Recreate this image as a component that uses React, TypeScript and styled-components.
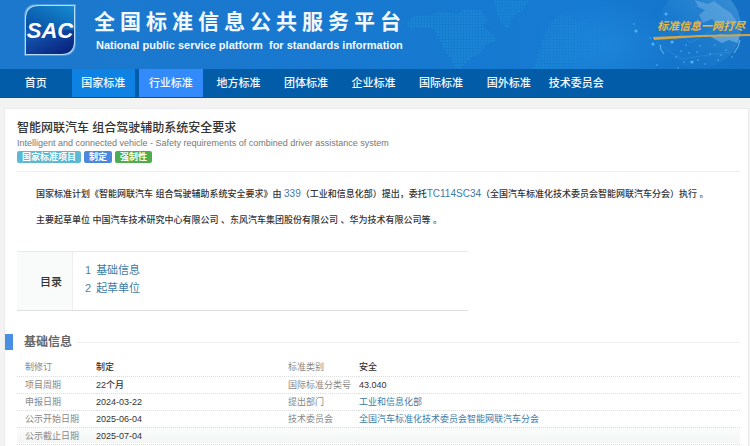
import React from "react";
import styled, { createGlobalStyle } from "styled-components";

const GlobalStyle = createGlobalStyle`
  * { box-sizing: border-box; }
  body {
    margin: 0;
    background: #f4f3f3;
    color: #333;
    font-family: "Liberation Sans", "Noto Sans CJK SC", sans-serif;
    font-size: 9px;
    overflow: hidden;
  }
`;

const Banner = styled.header`
  position: relative;
  display: flex;
  align-items: flex-start;
  height: 69px;
  padding: 2px 0 0 22px;
  overflow: hidden;
  background: linear-gradient(90deg, #1c78cd 0%, #1779d0 55%, #167bd3 78%, #1370c4 100%);
`;

const BannerArt = styled.svg`
  position: absolute;
  top: 0;
  right: 0;
  width: 350px;
  height: 69px;
`;

const Logo = styled.svg`
  flex: none;
  width: 56px;
  height: 56px;
`;

const Brand = styled.div`
  margin-left: 16px;
  padding-top: 7px;
  color: #f2f9ff;
  white-space: nowrap;
`;

const BrandName = styled.h1`
  margin: 0;
  font-size: 21px;
  line-height: 26px;
  font-weight: 700;
  letter-spacing: 5px;
`;

const BrandSub = styled.p`
  margin: 4px 0 0 2px;
  font-size: 11px;
  line-height: 12px;
  font-weight: 700;
  white-space: pre;
`;

const Slogan = styled.p`
  position: absolute;
  top: 18px;
  right: 5px;
  margin: 0;
  color: #e9b740;
  font-size: 11px;
  line-height: 16px;
  font-style: italic;
  font-weight: 700;
`;

const NavBar = styled.nav`
  background: #025ca8;
  border-bottom: 1px solid #0b548f;
`;

const NavList = styled.ul`
  display: grid;
  grid-template-columns: repeat(9, minmax(0, 1fr));
  gap: 4px;
  max-width: 604px;
  margin: 0 0 0 4px;
  padding: 0;
  list-style: none;
`;

const NavLink = styled.a<{ $tone?: string }>`
  display: flex;
  justify-content: center;
  color: #f4faff;
  background: ${(p) => p.$tone ?? "transparent"};
  font-size: 11px;
  line-height: 28px;
  font-weight: 500;
  text-decoration: none;
  white-space: nowrap;
`;

const Panel = styled.main`
  margin: 10px 1px 0 4px;
  padding: 11px 8px 12px 0;
  background: #fff;
  border: 1px solid #ebebeb;
`;

const TitleBlock = styled.section`
  margin-left: 12px;
  padding-bottom: 8px;
  border-bottom: 1px solid #eee;
`;

const Title = styled.h2`
  margin: 0;
  font-size: 12px;
  line-height: 16px;
  font-weight: 500;
`;

const Subtitle = styled.p`
  margin: 0;
  color: #777;
  font-size: 9px;
  line-height: 14px;
`;

const Tags = styled.div`
  display: flex;
  gap: 3px;
  margin-top: 1px;
`;

const Tag = styled.span<{ $color: string }>`
  padding: 0 5px;
  border-radius: 2px;
  color: #fff;
  background: ${(p) => p.$color};
  font-size: 9px;
  line-height: 12px;
  font-weight: 700;
`;

const Summary = styled.section`
  padding: 9px 0 0 31px;
`;

const Paragraph = styled.p`
  margin: 0;
  font-size: 9px;
  line-height: 26px;
  font-weight: 500;
`;

const TextLink = styled.a`
  color: #3d7ba6;
  font-weight: 400;
  text-decoration: none;
`;

const CodeLink = styled(TextLink)`
  font-size: 10px;
`;

const Contents = styled.section`
  display: flex;
  max-width: 451px;
  margin: 18px 0 0 12px;
  border-top: 1px solid #e9e9e9;
  border-bottom: 1px solid #dfdfdf;
`;

const ContentsTitle = styled.h3`
  display: flex;
  align-items: center;
  justify-content: flex-end;
  width: 56px;
  margin: 0;
  padding-right: 10px;
  background: #f9fafa;
  border-right: 1px solid #eee;
  font-size: 11px;
  font-weight: 500;
`;

const ContentsList = styled.ol`
  margin: 0;
  padding: 9px 12px 13px;
  list-style: none;
`;

const ContentsItem = styled.li`
  display: flex;
  gap: 5px;
  color: #55839f;
  font-size: 11px;
  line-height: 18px;
`;

const SectionHead = styled.div`
  display: flex;
  align-items: center;
  margin-top: 22px;
`;

const Marker = styled.span`
  width: 8px;
  height: 16px;
  background: #4a90e2;
`;

const SectionTitle = styled.h3`
  margin: 0 5px 0 11px;
  color: #666;
  font-size: 12px;
  line-height: 18px;
  font-weight: 700;
`;

const Rule = styled.span`
  flex: 1;
  height: 1px;
  background: #eee;
`;

const InfoTable = styled.table`
  width: calc(100% - 12px);
  margin: 8px 0 0 12px;
  border-collapse: collapse;
  table-layout: fixed;
`;

const TermColumn = styled.col`
  width: 79px;
`;

const ValueColumn = styled.col`
  width: 184px;
`;

const InfoRow = styled.tr`
  border-bottom: 1px dotted #ddd;
  &:last-child { background: linear-gradient(#fbfcfc, #f4f5f5); }
`;

const cellBase = `
  padding: 0;
  height: 17px;
  font-size: 9px;
  line-height: 16px;
  text-align: left;
  white-space: nowrap;
`;

const Term = styled.th`
  ${cellBase}
  padding-left: 8px;
  color: #888;
  font-weight: 400;
`;

const Value = styled.td`
  ${cellBase}
  color: #333;
  font-weight: 500;
`;

const navItems: { label: string; tone?: string }[] = [
  { label: "首页" },
  { label: "国家标准", tone: "#0d82e2" },
  { label: "行业标准", tone: "#338bfb" },
  { label: "地方标准" },
  { label: "团体标准" },
  { label: "企业标准" },
  { label: "国际标准" },
  { label: "国外标准" },
  { label: "技术委员会" },
];

type Cell = { term: string; value: string; link?: boolean };

const rows: [Cell, Cell | null][] = [
  [{ term: "制修订", value: "制定" }, { term: "标准类别", value: "安全" }],
  [{ term: "项目周期", value: "22个月" }, { term: "国际标准分类号", value: "43.040" }],
  [{ term: "申报日期", value: "2024-03-22" }, { term: "提出部门", value: "工业和信息化部", link: true }],
  [
    { term: "公示开始日期", value: "2025-06-04" },
    { term: "技术委员会", value: "全国汽车标准化技术委员会智能网联汽车分会", link: true },
  ],
  [{ term: "公示截止日期", value: "2025-07-04" }, null],
];

const sparks = [
  [266, 14, 2], [236, 31, 2], [234, 24, 1], [253, 44, 2], [272, 42, 2], [284, 62, 1],
  [292, 62, 2], [298, 60, 1], [257, 65, 1], [300, 46, 1], [310, 54, 1], [289, 53, 1],
  [281, 51, 1], [318, 60, 1], [326, 50, 1], [305, 64, 1], [276, 57, 1], [332, 57, 1],
  [250, 38, 1], [286, 45, 1], [315, 45, 1], [278, 68, 1], [297, 52, 1], [321, 55, 1],
];

function WorldArt() {
  return (
    <BannerArt viewBox="0 0 350 69" aria-hidden="true">
      <defs>
        <pattern id="mesh" width="3" height="3" patternUnits="userSpaceOnUse">
          <rect width="3" height="3" fill="#239bdf" fillOpacity="0.32" />
          <path d="M0 0H3M0 0V3" stroke="#0f69bb" strokeWidth="1" strokeOpacity="0.4" />
        </pattern>
        <radialGradient id="glow">
          <stop offset="0" stopColor="#2a9ae8" stopOpacity="0.35" />
          <stop offset="1" stopColor="#2a9ae8" stopOpacity="0" />
        </radialGradient>
        <linearGradient id="globe" x1="0" y1="1" x2="1" y2="0">
          <stop offset="0.3" stopColor="#4fb2ee" stopOpacity="0.04" />
          <stop offset="1" stopColor="#8cc8ef" stopOpacity="0.4" />
        </linearGradient>
        <linearGradient id="fade">
          <stop offset="0.6" stopColor="#fff" />
          <stop offset="1" stopColor="#fff" stopOpacity="0" />
        </linearGradient>
        <mask id="fadeMask">
          <rect x="0" width="215" height="69" fill="url(#fade)" />
        </mask>
      </defs>
      <ellipse cx="205" cy="45" rx="70" ry="44" fill="url(#glow)" />
      <g mask="url(#fadeMask)" fill="url(#mesh)">
        <path d="M6 24L14 16L28 15L42 12L58 14L66 8L80 10L88 20L82 26L92 34L97 40L86 45L80 53L72 58L62 66L60 69L54 66L52 58L46 53L40 40L34 29L22 27L10 29Z" />
        <path d="M94 0H129L123 11L113 16L108 29L102 24L97 12Z" />
        <path d="M133 69L140 50L145 35L152 22L160 14L172 16L178 22L190 18L202 25L214 30L210 48L198 55L184 69Z" />
      </g>
      <circle cx="300" cy="27" r="41" fill="url(#globe)" />
      <path d="M295 0L308 4L314 1L323 8L331 13L337 22L335 27L325 21L319 26L312 19L303 23L299 15L305 10L298 7Z" fill="#a9d5f2" fillOpacity="0.3" />
      <path d="M311 37L320 34L333 36L340 33L338 43L329 40L322 43Z" fill="#a9d5f2" fillOpacity="0.4" />
      <path d="M260 45Q260 50 264 54M340 40Q339 47 334 53" stroke="#9bd7fa" strokeOpacity="0.7" fill="none" strokeWidth="1" />
      <path d="M264 18L290 43L311 31M256 42L281 59L330 52M272 42L298 20" stroke="#62bdf2" strokeOpacity="0.18" fill="none" />
      {sparks.map(([x, y, r]) => (
        <circle key={`${x}-${y}`} cx={x} cy={y} r={r * 0.8} fill="#55c6ff" fillOpacity="0.8" />
      ))}
      <path d="M253 37L300 35L350 34V36L300 37L254 40Z" fill="#d5a444" />
    </BannerArt>
  );
}

function SacLogo() {
  return (
    <Logo viewBox="0 0 56 56" role="img" aria-label="SAC">
      <defs>
        <linearGradient id="sacTop" x1="0" y1="1" x2="1" y2="0">
          <stop offset="0" stopColor="#064ba1" />
          <stop offset="1" stopColor="#168bd0" />
        </linearGradient>
        <linearGradient id="sacBottom" x1="0" y1="0" x2="1" y2="1">
          <stop offset="0" stopColor="#1560b8" />
          <stop offset="1" stopColor="#071b77" />
        </linearGradient>
      </defs>
      <path d="M15 2H54V41Q54 54 40 54H2V15Q2 2 15 2Z" fill="#7dbbf2" fillOpacity="0.5" />
      <path d="M16 3H53V40Q53 53 40 53H3V16Q3 3 16 3Z" fill="#b7dcfa" />
      <path d="M17 4H52V28H4V17Q4 4 17 4Z" fill="url(#sacTop)" />
      <path d="M4 28H52V39Q52 52 39 52H4Z" fill="url(#sacBottom)" />
      <text
        x="28"
        y="36"
        textAnchor="middle"
        fill="#fff"
        fontFamily="Liberation Sans, sans-serif"
        fontSize="22"
        fontWeight="700"
        fontStyle="italic"
      >
        SAC
      </text>
    </Logo>
  );
}

function InfoCell({ cell }: { cell: Cell | null }) {
  if (!cell) return <Value colSpan={2} />;
  return (
    <>
      <Term scope="row">{cell.term}</Term>
      <Value>{cell.link ? <TextLink href="#">{cell.value}</TextLink> : cell.value}</Value>
    </>
  );
}

export default function App() {
  return (
    <div lang="zh-CN">
      <GlobalStyle />
      <Banner>
        <WorldArt />
        <SacLogo />
        <Brand>
          <BrandName>全国标准信息公共服务平台</BrandName>
          <BrandSub>{"National public service platform  for standards information"}</BrandSub>
        </Brand>
        <Slogan>标准信息一网打尽</Slogan>
      </Banner>
      <NavBar>
        <NavList>
          {navItems.map((item) => (
            <li key={item.label}>
              <NavLink href="#" $tone={item.tone}>{item.label}</NavLink>
            </li>
          ))}
        </NavList>
      </NavBar>
      <Panel>
        <TitleBlock>
          <Title>智能网联汽车 组合驾驶辅助系统安全要求</Title>
          <Subtitle>
            Intelligent and connected vehicle - Safety requirements of combined driver assistance system
          </Subtitle>
          <Tags>
            <Tag $color="#5bb9d6">国家标准项目</Tag>
            <Tag $color="#4a89dc">制定</Tag>
            <Tag $color="#4cae4c">强制性</Tag>
          </Tags>
        </TitleBlock>
        <Summary>
          <Paragraph>
            国家标准计划《智能网联汽车 组合驾驶辅助系统安全要求》由 <CodeLink href="#">339</CodeLink>
            （工业和信息化部）提出，委托<CodeLink href="#">TC114SC34</CodeLink>
            （全国汽车标准化技术委员会智能网联汽车分会）执行 。
          </Paragraph>
          <Paragraph>
            主要起草单位 中国汽车技术研究中心有限公司 、东风汽车集团股份有限公司 、华为技术有限公司等 。
          </Paragraph>
        </Summary>
        <Contents>
          <ContentsTitle>目录</ContentsTitle>
          <ContentsList>
            <ContentsItem>1 <TextLink href="#basic">基础信息</TextLink></ContentsItem>
            <ContentsItem>2 <TextLink href="#drafters">起草单位</TextLink></ContentsItem>
          </ContentsList>
        </Contents>
        <SectionHead id="basic">
          <Marker />
          <SectionTitle>基础信息</SectionTitle>
          <Rule />
        </SectionHead>
        <InfoTable>
          <colgroup>
            <TermColumn />
            <ValueColumn />
            <TermColumn />
            <col />
          </colgroup>
          <tbody>
            {rows.map(([left, right]) => (
              <InfoRow key={left.term}>
                <InfoCell cell={left} />
                <InfoCell cell={right} />
              </InfoRow>
            ))}
          </tbody>
        </InfoTable>
      </Panel>
    </div>
  );
}
